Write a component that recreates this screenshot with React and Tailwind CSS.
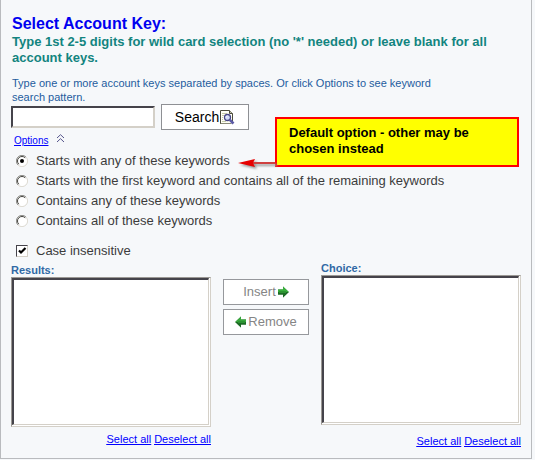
import React, { useState } from 'react';

const keywordOptions = [
  { id: 'startsAny', label: 'Starts with any of these keywords' },
  { id: 'startsFirst', label: 'Starts with the first keyword and contains all of the remaining keywords' },
  { id: 'containsAny', label: 'Contains any of these keywords' },
  { id: 'containsAll', label: 'Contains all of these keywords' },
];

const SearchIcon = () => (
  <svg width="16" height="16" viewBox="0 0 16 16" fill="none" aria-hidden="true">
    <path d="M1.5 14.5V1.5h9l3 3v10z" fill="#fffff4" />
    <path d="M1.5 15V1.5h9l3 3V14" stroke="#4a4a3c" />
    <path d="M1.5 14.5h11" stroke="#8b8b78" />
    <path d="M10.5 1.5v3h3" fill="#c8c8b0" stroke="#4a4a3c" />
    <path d="M3 4.5h5M3 6.5h2M3 8.5h1M3 10.5h1M3 12.5h4" stroke="#c5c9a8" />
    <circle cx="8.5" cy="8.5" r="3" fill="#d3dcfa" stroke="#484787" strokeWidth="1.3" />
    <path d="M7 8.5c0-1 .6-1.5 1.5-1.5" stroke="#fff" />
    <path d="M10.8 10.8l3.7 3.7" stroke="#5c5ba6" strokeWidth="2.6" />
  </svg>
);

const ArrowIcon = ({ left }) => (
  <svg
    width="11"
    height="12"
    viewBox="0 0 11 12"
    aria-hidden="true"
    className={left ? 'rotate-180' : ''}
  >
    <path d="M0 3.5h5V0.5L10.8 6L5 11.5v-3H0z" fill="#1d6b25" />
    <path d="M0 3.5h5V0.5L10.8 6H0z" fill={left ? '#1d6b25' : '#38b03c'} />
    <path d="M0 6h10.8L5 11.5v-3H0z" fill={left ? '#38a83c' : '#1d6b25'} />
    <path d="M1 5h7v2H1z" fill="#2c9432" />
  </svg>
);

const KeywordRadio = ({ option, checked, onChange }) => (
  <label className="flex h-5 items-center">
    <span className="grid w-[25px] shrink-0 pl-[5px]">
      <input
        type="radio"
        name="keywordMode"
        value={option.id}
        checked={checked}
        onChange={onChange}
        className="peer col-start-1 row-start-1 size-3 appearance-none rounded-full"
      />
      <svg
        width="12"
        height="12"
        viewBox="0 0 12 12"
        fill="none"
        aria-hidden="true"
        className="pointer-events-none col-start-1 row-start-1 [&_.dot]:opacity-0 peer-checked:[&_.dot]:opacity-100"
      >
        <circle cx="6" cy="6" r="5" fill="#fff" />
        <path d="M2 10A5.5 5.5 0 0 1 10 2" stroke="#8c8c88" />
        <path d="M2.8 9.2A4.5 4.5 0 0 1 9.2 2.8" stroke="#45453f" />
        <path d="M2 10A5.5 5.5 0 0 0 10 2" stroke="#dedbd2" />
        <circle className="dot" cx="6" cy="6" r="2" fill="#000" />
      </svg>
    </span>
    <span className="whitespace-nowrap">{option.label}</span>
  </label>
);

const KeyList = ({ id, title, linksClass }) => (
  <div className="w-50">
    <label htmlFor={id} className="block text-[11px] leading-3 font-bold text-[#3069a5]">{title}</label>
    <div className="mt-px border border-t-[#9b9894] border-r-[#d4d0c8] border-b-[#d4d0c8] border-l-[#9b9894] bg-white pr-px pb-px">
      <select
        id={id}
        multiple
        className="block h-[147px] w-full appearance-none rounded-none border-t-2 border-r border-b border-l-2 border-t-[#45434a] border-r-[#d4d0c8] border-b-[#d4d0c8] border-l-[#45434a] bg-white outline-none"
      />
    </div>
    <div className={`flex justify-end gap-[3px] text-[11px] leading-3 text-[#0000ff] underline ${linksClass}`}>
      <a href="#select">Select all</a>
      <a href="#deselect">Deselect all</a>
    </div>
  </div>
);

const App = () => {
  const [mode, setMode] = useState('startsAny');
  const [insensitive, setInsensitive] = useState(true);

  return (
    <div className="min-h-screen bg-[#f6f8fa] font-['Liberation_Sans',Arial,sans-serif]">
      <main className="mr-[3px] border-r border-b border-l border-[#b9bbbe] px-2.5 pt-3.5 pb-[11px]">
        <h1 className="pl-px text-base leading-5 font-bold text-[#0000f0]">Select Account Key:</h1>
        <p className="pl-px text-[13px] leading-4 font-bold text-[#12847f]">
          Type 1st 2-5 digits for wild card selection (no '*' needed) or leave blank for all account keys.
        </p>
        <label htmlFor="keys" className="mt-2.5 block max-w-110 pl-px text-[11px] leading-3.5 text-[#245c9e]">
          Type one or more account keys separated by spaces. Or click Options to see keyword search pattern.
        </label>

        <div className="flex items-center gap-1.5">
          <input
            id="keys"
            type="text"
            className="h-5.5 w-36 border-2 border-t-[#45434a] border-r-[#d4d0c8] border-b-[#d4d0c8] border-l-[#45434a] bg-white px-1 text-xs outline-none"
          />
          <button type="button" className="flex h-6.5 w-22 items-center justify-center border border-[#8e9094] bg-white text-sm text-black">
            Search
            <SearchIcon />
          </button>
        </div>

        <div className="mt-1 mb-[3px] flex gap-2 pl-[3px] text-[10px] leading-3.5">
          <a href="#options" className="text-[#0000ff] underline">Options</a>
          <svg width="9" height="9" viewBox="0 0 9 9" fill="none" stroke="#55558c" aria-hidden="true">
            <path d="M1 4L4.5 0.7L8 4M1 8L4.5 4.7L8 8" />
          </svg>
        </div>

        <div className="relative text-[13px] text-[#3c3c3c]">
          {keywordOptions.map((option) => (
            <KeywordRadio
              key={option.id}
              option={option}
              checked={mode === option.id}
              onChange={() => setMode(option.id)}
            />
          ))}

          {/* callout pointing at the default option */}
          <div className="absolute -top-8.5 left-56 flex items-end">
            <svg width="40" height="16" viewBox="0 0 40 16" className="drop-shadow-[2px_2px_1px_#999]" aria-hidden="true">
              <path d="M12 12h28" stroke="#cf4040" strokeWidth="2" />
              <path d="M3 12L20 8L18 12L20 16z" fill="#e60000" />
            </svg>
            <div className="h-12.5 w-61 border-2 border-[#f00] bg-[#ff0] py-1.5 pl-3 text-[13px] leading-4 font-bold text-black">
              Default option - other may be chosen instead
            </div>
          </div>
        </div>

        <label className="mt-2.5 flex h-5 items-center text-[13px] text-[#3c3c3c]">
          <span className="grid w-[25px] shrink-0 pl-[5px]">
            <input
              type="checkbox"
              checked={insensitive}
              onChange={(e) => setInsensitive(e.target.checked)}
              className="peer col-start-1 row-start-1 size-3 appearance-none border border-t-[#45434a] border-r-[#d4d0c8] border-b-[#d4d0c8] border-l-[#45434a] bg-white"
            />
            <svg
              width="12"
              height="12"
              viewBox="0 0 12 12"
              fill="none"
              aria-hidden="true"
              className="pointer-events-none invisible col-start-1 row-start-1 peer-checked:visible"
            >
              <path d="M3 5.5L5 7.5L9.5 3" stroke="#000" strokeWidth="2.2" />
            </svg>
          </span>
          Case insensitive
        </label>

        <div className="mt-px flex items-start justify-between">
          <div className="pt-0.5">
            <KeyList id="results" title="Results:" linksClass="mt-1.5" />
          </div>
          <div className="flex flex-col gap-1 pt-[17px] text-[13px] text-[#858585]">
            <button type="button" className="flex h-6.5 w-21.5 items-center justify-center gap-0.5 border border-[#96989c] bg-white">
              Insert
              <ArrowIcon />
            </button>
            <button type="button" className="flex h-6.5 w-21.5 items-center justify-center gap-0.5 border border-[#96989c] bg-white">
              <ArrowIcon left />
              Remove
            </button>
          </div>
          <KeyList id="choice" title="Choice:" linksClass="mt-2.5" />
        </div>
      </main>
    </div>
  );
};

export default App;
